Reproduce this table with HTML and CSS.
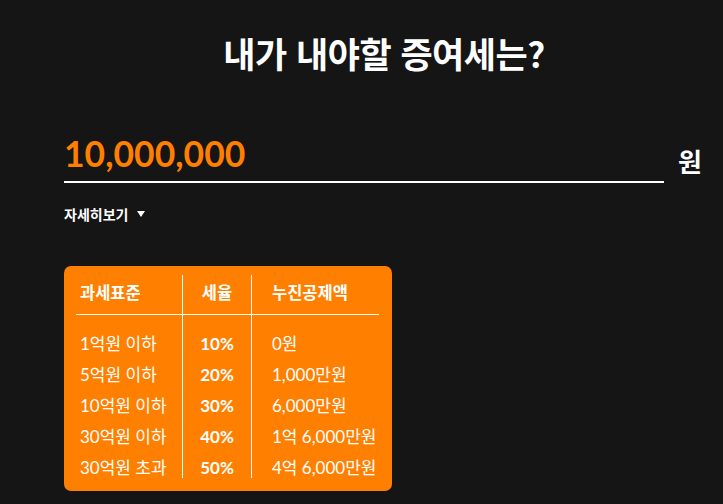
FILE: index.html
```html
<!DOCTYPE html>
<html lang="ko">
<head>
<meta charset="utf-8">
<title>증여세 계산기</title>
<link rel="stylesheet" href="styles.css">
</head>
<body>
<main class="wrap">
  <h1 class="title">내가 내야할 증여세는?</h1>
  <div class="amount-row">
    <div class="amount-field"><span class="amount">10,000,000</span></div>
    <span class="unit">원</span>
  </div>
  <button class="toggle" type="button">자세히보기 <span class="caret"></span></button>
  <div class="card">
    <div class="grid">
      <div class="cell head c1">과세표준</div>
      <div class="cell head c2">세율</div>
      <div class="cell head c3">누진공제액</div>

      <div class="cell c1 first">1억원 이하</div>
      <div class="cell c2 first rate">10%</div>
      <div class="cell c3 first">0원</div>

      <div class="cell c1">5억원 이하</div>
      <div class="cell c2 rate">20%</div>
      <div class="cell c3">1,000만원</div>

      <div class="cell c1">10억원 이하</div>
      <div class="cell c2 rate">30%</div>
      <div class="cell c3">6,000만원</div>

      <div class="cell c1">30억원 이하</div>
      <div class="cell c2 rate">40%</div>
      <div class="cell c3">1억 6,000만원</div>

      <div class="cell c1 last">30억원 초과</div>
      <div class="cell c2 rate last">50%</div>
      <div class="cell c3 last">4억 6,000만원</div>
    </div>
  </div>
</main>
</body>
</html>
```

FILE: styles.css
```css
* { box-sizing: border-box; }
html, body {
  margin: 0;
  background: #151515;
  color: #fff;
  font-family: "Lato", "Noto Sans CJK KR", sans-serif;
}
.wrap {
  width: 640px;
  margin-left: 64px;
  padding-top: 26px;
}
.title {
  margin: 0;
  text-align: center;
  font-family: "Noto Sans CJK KR", sans-serif;
  font-weight: 700;
  font-size: 35px;
  line-height: 54px;
  letter-spacing: -0.5px;
}
.amount-row {
  display: flex;
  align-items: flex-end;
  margin-top: 50px;
}
.amount-field {
  width: 600px;
  border-bottom: 2px solid #fff;
  height: 53px;
  display: flex;
  align-items: center;
}
.amount {
  font-weight: 700;
  font-size: 35.5px;
  color: #ff7f00;
  line-height: 40px;
  margin-top: -4px;
}
.unit {
  margin-left: 14px;
  font-family: "Noto Sans CJK KR", sans-serif;
  font-weight: 700;
  font-size: 26px;
  line-height: 34px;
  margin-bottom: 5px;
}
.toggle {
  display: flex;
  align-items: center;
  gap: 9px;
  margin-top: 21px;
  padding: 0;
  border: 0;
  background: none;
  color: #fff;
  font-family: "Noto Sans CJK KR", sans-serif;
  font-weight: 700;
  font-size: 14px;
  line-height: 20px;
}
.caret {
  width: 0;
  height: 0;
  border-left: 4px solid transparent;
  border-right: 4px solid transparent;
  border-top: 6px solid #fff;
}
.card {
  width: 328px;
  margin-top: 42px;
  background: #ff7f00;
  border-radius: 7px;
  padding: 9px 13px 13px 12px;
}
.grid {
  display: grid;
  grid-template-columns: 106px 69px 128px;
  grid-template-rows: 40px 44px 31px 31px 31px 26px;
}
.cell {
  font-size: 17px;
  line-height: 31px;
  white-space: nowrap;
}
.head {
  font-family: "Noto Sans CJK KR", sans-serif;
  font-weight: 700;
  font-size: 16.5px;
  line-height: 34px;
  border-bottom: 1px solid #fff;
}
.c1 { padding-left: 4px; }
.c2 { text-align: center; border-left: 1px solid #fff; }
.c3 { padding-left: 20px; border-left: 1px solid #fff; }
.first { padding-top: 13px; }
.rate { font-weight: 700; }
```
